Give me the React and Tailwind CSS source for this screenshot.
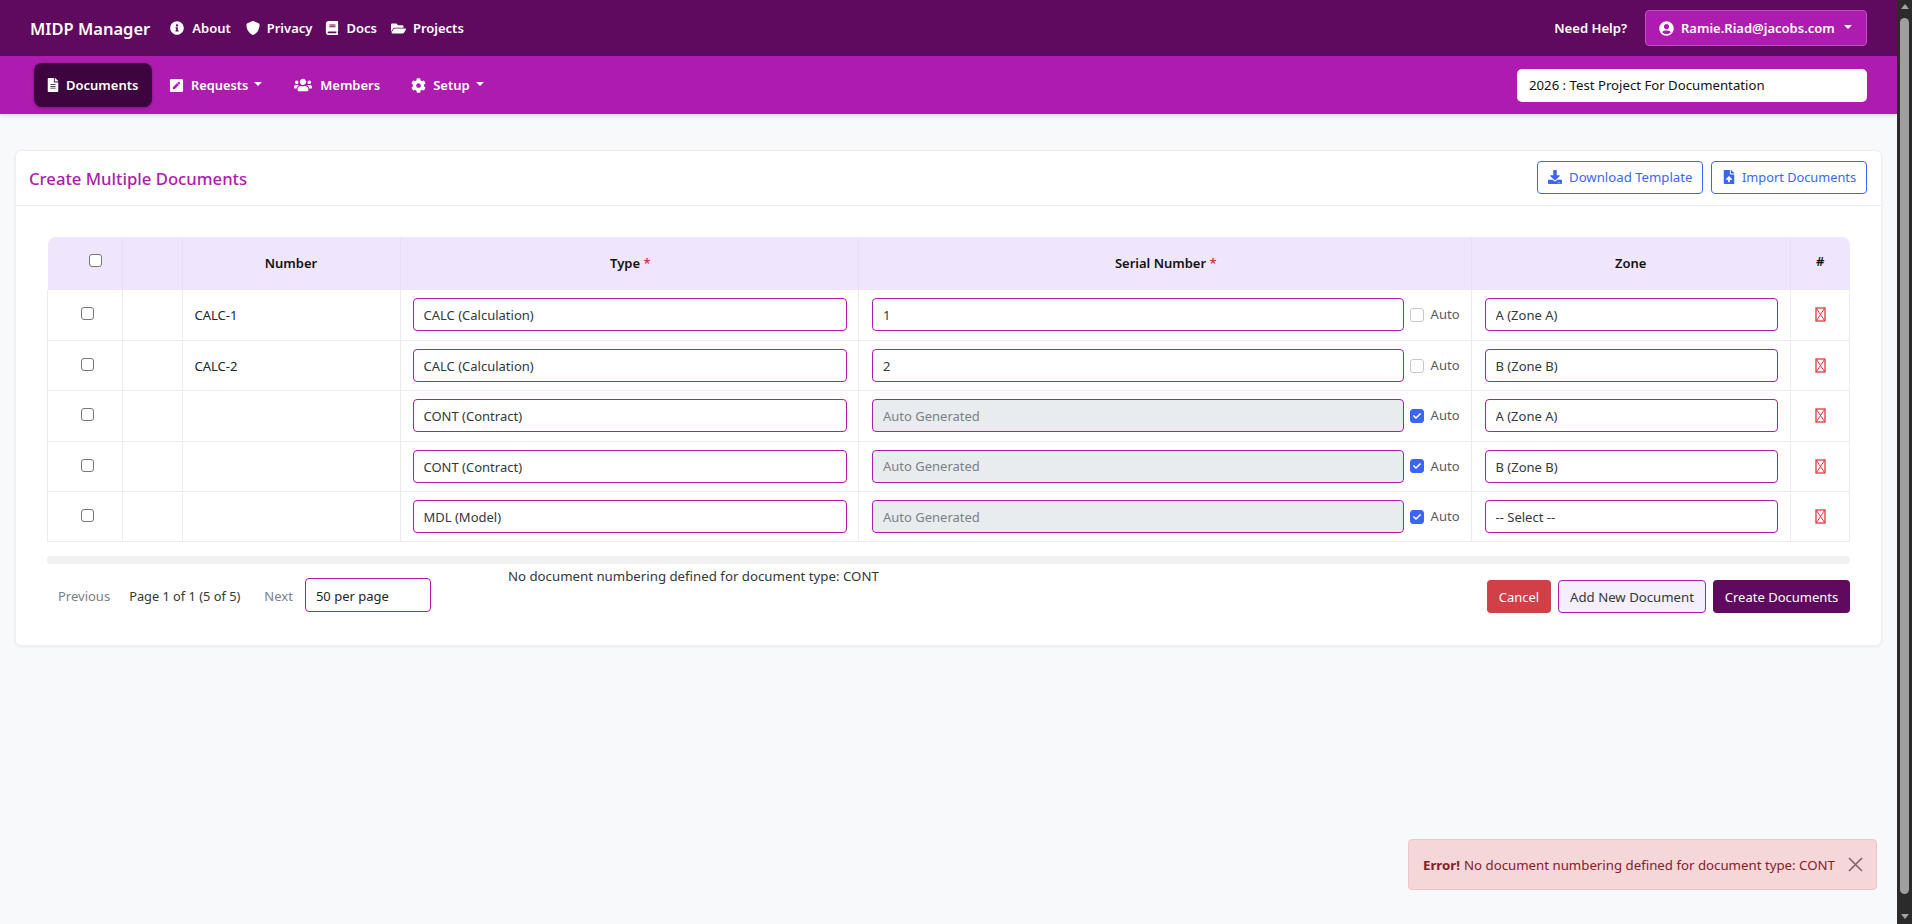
import React from "react";
import {
  FaInfoCircle, FaBook, FaFolderOpen, FaFileAlt, FaPenSquare, FaUsers, FaCog,
  FaUserCircle, FaDownload, FaFileUpload, FaCheck,
} from "react-icons/fa";
import { FaShield } from "react-icons/fa6";

const rows = [
  { number: "CALC-1", type: "CALC (Calculation)", serial: "1", auto: false, zone: "A (Zone A)" },
  { number: "CALC-2", type: "CALC (Calculation)", serial: "2", auto: false, zone: "B (Zone B)" },
  { number: "", type: "CONT (Contract)", serial: "", auto: true, zone: "A (Zone A)" },
  { number: "", type: "CONT (Contract)", serial: "", auto: true, zone: "B (Zone B)" },
  { number: "", type: "MDL (Model)", serial: "", auto: true, zone: "-- Select --" },
];

function Caret({ cls = "ml-2" }) {
  return <span className={`inline-block w-0 h-0 border-x-[4px] border-x-transparent border-t-[4.5px] border-t-white mb-0.5 ${cls}`} />;
}

function TopLink({ icon, children, cls, gap = "gap-[7px]" }) {
  return (
    <a className={`flex items-center text-white text-[13px] font-semibold ${gap} ${cls}`}>
      {icon}
      <span className="pt-[2px]">{children}</span>
    </a>
  );
}

function Sel({ value }) {
  return (
    <select defaultValue={value} className="w-full h-[33px] appearance-none rounded-[4px] border border-[#ad1cae] bg-white pl-[10px] pt-[2px] text-[13px] text-[#33383d] outline-none">
      <option>{value}</option>
    </select>
  );
}

function Row({ r }) {
  return (
    <tr className="h-[50.4px] border-b border-[#e9ecef]">
      <td className="border-l border-r border-[#e9ecef] pl-[33px]">
        <span className="block w-[13px] h-[13px] rounded-[3px] border border-[#767676] bg-white -mt-0.5" />
      </td>
      <td className="border-r border-[#e9ecef]" />
      <td className="border-r border-[#e9ecef] pl-3 pt-[2px] text-[13px] text-[#212529]">{r.number}</td>
      <td className="border-r border-[#e9ecef] pl-[12px] pr-[11px]"><Sel value={r.type} /></td>
      <td className="border-r border-[#e9ecef] pl-[13px] pr-[11px]">
        <div className="flex items-center">
          <input
            readOnly
            disabled={r.auto}
            value={r.auto ? "Auto Generated" : r.serial}
            className={`flex-1 min-w-0 h-[33px] rounded-[4px] border border-[#ad1cae] pl-[10px] text-[13px] outline-none ${r.auto ? "bg-[#e9ecef] text-[#7b8086]" : "bg-white text-[#33383d]"}`}
          />
          <span className={`ml-[6px] flex items-center justify-center w-[14px] h-[14px] rounded-[3px] border ${r.auto ? "bg-[#3b66f5] border-[#3b66f5]" : "bg-white border-[#c6c9cc]"}`}>
            {r.auto && <FaCheck className="text-white text-[8px]" />}
          </span>
          <span className="ml-[7px] text-[13px] text-[#555b61]">Auto</span>
        </div>
      </td>
      <td className="border-r border-[#e9ecef] pl-[13px] pr-3"><Sel value={r.zone} /></td>
      <td className="border-r border-[#e9ecef]">
        <svg width="11" height="15" viewBox="0 0 11 15" className="mx-auto" fill="none" stroke="#e0353f" strokeWidth="1.3">
          <rect x="1" y="1" width="9" height="13" />
          <path d="M1.5 1.5 9.5 13.5M9.5 1.5 1.5 13.5" strokeWidth="1" />
        </svg>
      </td>
    </tr>
  );
}

export default function App() {
  return (
    <div className="flex h-[924px] overflow-hidden bg-[#f8f9fb] font-['Noto_Sans','Liberation_Sans',sans-serif]">
      <div className="relative flex-1 min-w-0">
        <header className="flex items-center h-[56px] bg-[#5f0a5f] pl-[30px] pr-[30px]">
          <span className="text-white text-[16.5px] font-semibold pt-[2px] mr-[20px]">MIDP Manager</span>
          <TopLink cls="mr-[15px]" gap="gap-[8px]" icon={<FaInfoCircle className="text-[14px]" />}>About</TopLink>
          <TopLink cls="mr-[13px]" icon={<FaShield className="text-[14px]" />}>Privacy</TopLink>
          <TopLink cls="mr-[14px]" icon={<FaBook className="text-[14px]" />}>Docs</TopLink>
          <TopLink icon={<FaFolderOpen className="text-[15px]" />}>Projects</TopLink>
          <span className="ml-auto text-white text-[13.1px] font-semibold pt-[2px] mr-[18px]">Need Help?</span>
          <button className="flex items-center w-[222px] h-[36px] pl-[13px] rounded-[4px] border border-[#c34cc4] bg-[#ad1cae] text-white text-[13px] font-semibold">
            <FaUserCircle className="text-[15px] mr-[7px]" />
            <span className="pt-[2px]">Ramie.Riad@jacobs.com</span>
            <Caret cls="ml-[9px]" />
          </button>
        </header>
        <nav className="relative flex items-center h-[58px] bg-[#ad1cae] pl-[34px] pr-[30px] shadow-[0_2px_4px_rgba(0,0,0,0.12)]">
          <a className="flex items-center gap-[6.5px] w-[118px] h-[44px] pl-[11.5px] rounded-[8px] bg-[#3d0440] text-white text-[13px] font-semibold shadow-[0_1px_3px_rgba(0,0,0,0.3)] mr-[17px]">
            <FaFileAlt className="text-[14px]" /><span className="pt-[2px]">Documents</span>
          </a>
          <a className="flex items-center text-white text-[12.8px] font-semibold mr-[32px]">
            <FaPenSquare className="text-[15px] mr-[7px]" /><span className="pt-[2px]">Requests</span><Caret cls="ml-[6px]" />
          </a>
          <a className="flex items-center gap-[8px] text-white text-[13px] font-semibold mr-[31px]">
            <FaUsers className="text-[18px]" /><span className="pt-[1px]">Members</span>
          </a>
          <a className="flex items-center text-white text-[13px] font-semibold">
            <FaCog className="text-[15px] mr-[7px]" /><span className="pt-[2px]">Setup</span><Caret cls="ml-[6px]" />
          </a>
          <select className="ml-auto w-[350px] h-[33px] appearance-none rounded-[5px] bg-white pl-[12px] pt-[1px] text-[13.2px] text-[#111] outline-none">
            <option>2026 : Test Project For Documentation</option>
          </select>
        </nav>
        <main className="px-[15px] pt-[36px]">
          <section className="rounded-[6px] border border-[#f0eaf9] bg-white shadow-[0_1px_3px_rgba(0,0,0,0.06)]">
            <div className="flex items-center h-[55px] border-b border-[#efe9f7] pl-[13px] pr-[14px]">
              <h1 className="text-[16.7px] font-medium pt-[2px] text-[#ad1cae]">Create Multiple Documents</h1>
              <div className="ml-auto flex gap-[8px] mb-[2px]">
                <button className="flex items-center gap-[7px] h-[33px] w-[166px] pl-[10px] rounded-[4px] border border-[#3b66f5] bg-white text-[13.2px] text-[#3b66f5]">
                  <FaDownload className="text-[14px]" /><span className="pt-[2px]">Download Template</span>
                </button>
                <button className="flex items-center gap-[6px] h-[33px] w-[156px] pl-[10px] rounded-[4px] border border-[#3b66f5] bg-white text-[12.8px] text-[#3b66f5]">
                  <FaFileUpload className="text-[14px]" /><span className="pt-[2px]">Import Documents</span>
                </button>
              </div>
            </div>
            <div className="pl-[31px] pr-[31px] pt-[31px] pb-[32px]">
              <table className="w-full table-fixed border-collapse">
                <colgroup>
                  <col className="w-[74.5px]" />
                  <col className="w-[60px]" />
                  <col className="w-[218px]" />
                  <col className="w-[458.5px]" />
                  <col className="w-[612.5px]" />
                  <col className="w-[319.5px]" />
                  <col />
                </colgroup>
                <thead>
                  <tr className="h-[53px] bg-[#efe6fd] text-[13px] font-semibold text-[#111]">
                    <th className="rounded-tl-[8px] border-r border-[#e9e0f7] pl-[41px] text-left font-semibold">
                      <span className="block w-[13px] h-[13px] rounded-[3px] border border-[#767676] bg-white -mt-1.5" />
                    </th>
                    <th className="border-r border-[#e9e0f7]" />
                    <th className="border-r border-[#e9e0f7] font-semibold">Number</th>
                    <th className="border-r border-[#e9e0f7] pl-[2px] font-semibold">Type <span className="text-[#dc3545]">*</span></th>
                    <th className="border-r border-[#e9e0f7] pl-[2px] font-semibold">Serial Number <span className="text-[#dc3545]">*</span></th>
                    <th className="border-r border-[#e9e0f7] font-semibold">Zone</th>
                    <th className="rounded-tr-[8px] font-semibold"><span className="block -mt-1">#</span></th>
                  </tr>
                </thead>
                <tbody>{rows.map((r, i) => <Row key={i} r={r} />)}</tbody>
              </table>
              <div className="mt-[14px] h-[8px] rounded-full bg-[#f0f0f0]" />
              <div className="flex items-start">
                <div className="flex items-center mt-[14px] pl-[11px]">
                  <span className="pt-[2px] text-[13px] text-[#7b8086]">Previous</span>
                  <span className="pt-[2px] ml-[19px] text-[12.8px] text-[#33383d]">Page 1 of 1 (5 of 5)</span>
                  <span className="pt-[2px] ml-[24px] text-[13px] text-[#7b8086]">Next</span>
                  <select className="ml-[12px] w-[126px] h-[34px] appearance-none rounded-[4px] border border-[#ad1cae] bg-white pl-[10px] pt-[2px] text-[13px] text-[#212529] outline-none">
                    <option>50 per page</option>
                  </select>
                </div>
                <span className="ml-[77px] mt-[3px] text-[13.25px] text-[#33383d]">No document numbering defined for document type: CONT</span>
                <div className="ml-auto flex gap-[7px] mt-[16px]">
                  <button className="h-[33px] w-[64px] pt-[2px] rounded-[4px] bg-[#d13f47] text-[13px] text-white">Cancel</button>
                  <button className="h-[33px] w-[148px] pt-[2px] rounded-[4px] border border-[#ad1cae] bg-[#f4eefd] text-[13.2px] text-[#33383d]">Add New Document</button>
                  <button className="h-[33px] w-[137px] pt-[2px] rounded-[4px] bg-[#5f0a5f] text-[13px] text-white">Create Documents</button>
                </div>
              </div>
            </div>
          </section>
        </main>
        <div className="absolute left-[1408px] top-[839px] flex items-center w-[469px] h-[51px] pl-[14px] pt-[2px] rounded-[4px] border border-[#f1c3c7] bg-[#f5d6d9] text-[13.25px] text-[#842029]">
          <b className="font-bold mr-[4px]">Error!</b>No document numbering defined for document type: CONT
          <svg width="15" height="15" viewBox="0 0 15 15" className="absolute left-[439px] top-[17px]" stroke="#7a6668" strokeWidth="1.6"><path d="M1 1 14 14M14 1 1 14" /></svg>
        </div>
      </div>
      <aside className="flex flex-col items-center w-[15px] bg-[#2b2b2b] shrink-0">
        <span className="mt-[4px] w-0 h-0 border-x-[4.5px] border-x-transparent border-b-[5px] border-b-[#a3a3a3]" />
        <span className="mt-[9px] w-[9px] flex-1 rounded-full bg-[#9f9f9f]" />
        <span className="mt-[20px] mb-[5px] w-0 h-0 border-x-[4.5px] border-x-transparent border-t-[5px] border-t-[#a3a3a3]" />
      </aside>
    </div>
  );
}
